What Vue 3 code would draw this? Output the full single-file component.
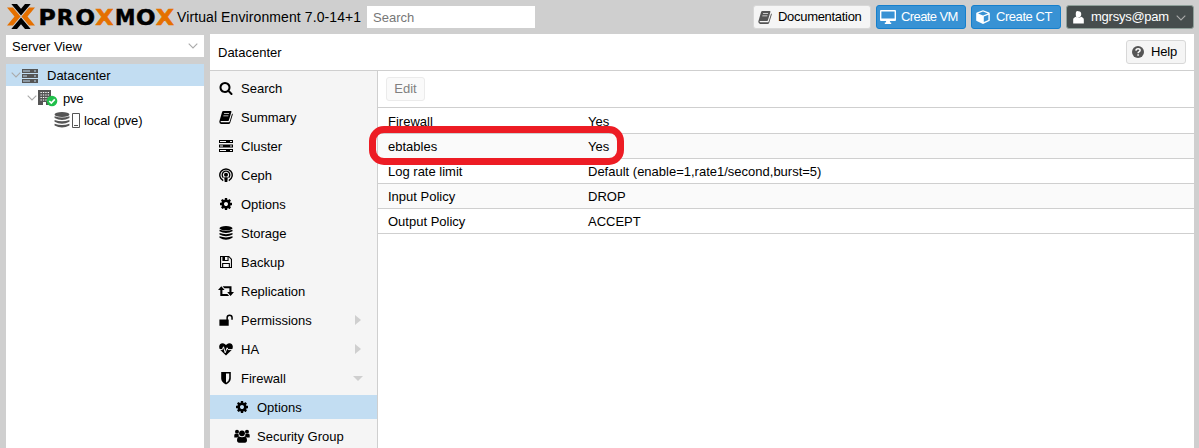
<script setup>
// Wordmark letters: left edge, horizontal stretch, side bearing of the glyph
const word = [
  { c: 'P', x: 34.8, s: 1.15, b: 1.9 },
  { c: 'R', x: 52.8, s: 1.06, b: 1.9 },
  { c: 'O', x: 70.5, s: 1.12, b: 1 },
  { c: 'X', x: 89.8, s: 1.16, b: 0.4, o: true },
  { c: 'M', x: 111, s: 1, b: 1.9 },
  { c: 'O', x: 131, s: 1.12, b: 1 },
  { c: 'X', x: 150.3, s: 1.16, b: 0.4, o: true },
]
const nav = [
  { icon: 'search', label: 'Search' },
  { icon: 'book', label: 'Summary' },
  { icon: 'server', label: 'Cluster' },
  { icon: 'ceph', label: 'Ceph' },
  { icon: 'cog', label: 'Options' },
  { icon: 'database', label: 'Storage' },
  { icon: 'floppy', label: 'Backup' },
  { icon: 'retweet', label: 'Replication' },
  { icon: 'unlock', label: 'Permissions', arrow: 'right' },
  { icon: 'heartbeat', label: 'HA', arrow: 'right' },
  { icon: 'shield', label: 'Firewall', arrow: 'down' },
  { icon: 'cog', label: 'Options', sub: true, active: true },
  { icon: 'users', label: 'Security Group', sub: true },
]
const rows = [
  ['Firewall', 'Yes'],
  ['ebtables', 'Yes'],
  ['Log rate limit', 'Default (enable=1,rate1/second,burst=5)'],
  ['Input Policy', 'DROP'],
  ['Output Policy', 'ACCEPT'],
]
</script>

<template>
  <div class="app">
    <svg class="defs" aria-hidden="true">
      <symbol id="search" viewBox="0 0 1792 1792"><path d="M1216 832q0-185-131.500-316.500t-316.500-131.500-316.500 131.500-131.500 316.500 131.500 316.500 316.500 131.500 316.500-131.500 131.500-316.500zm512 832q0 52-38 90t-90 38q-54 0-90-38l-343-342q-179 124-399 124-143 0-273.500-55.500t-225-150-150-225-55.500-273.500 55.500-273.500 150-225 225-150 273.500-55.500 273.500 55.500 225 150 150 225 55.500 273.500q0 220-124 399l343 343q37 37 37 90z" /></symbol>
      <symbol id="cog" viewBox="0 0 1792 1792"><path d="M1152 896q0-106-75-181t-181-75-181 75-75 181 75 181 181 75 181-75 75-181zm512-109v222q0 12-8 23t-20 13l-185 28q-19 54-39 91 35 50 107 138 10 12 10 25t-9 23q-27 37-99 108t-94 71q-12 0-26-9l-138-108q-44 23-91 38-16 136-29 186-7 28-36 28h-222q-14 0-24.500-8.500t-11.500-21.500l-28-184q-49-16-90-37l-141 107q-10 9-25 9-14 0-25-11-126-114-165-168-7-10-7-23 0-12 8-23 15-21 51-66.500t54-70.500q-27-50-41-99l-183-27q-13-2-21-12.500t-8-23.500v-222q0-12 8-23t19-13l186-28q14-46 39-92-40-57-107-138-10-12-10-24 0-10 9-23 26-36 98.500-107.500t94.500-71.500q13 0 26 10l138 107q44-23 91-38 16-136 29-186 7-28 36-28h222q14 0 24.500 8.500t11.500 21.500l28 184q49 16 90 37l142-107q9-9 24-9 13 0 25 10 129 119 165 170 7 8 7 22 0 12-8 23-15 21-51 66.500t-54 70.500q26 50 41 98l183 28q13 2 21 12.500t8 23.500z" /></symbol>
      <symbol id="book" viewBox="0 0 14 14">
        <path fill-rule="evenodd" d="M4.500 1h7.300q.9 0 .6 1l-2.500 8.200q-.3.900-1.300.9H2.300q-.8 0-.8.500 0 .7.900.7h7.400q.6 0 .8-.6l2.500-8.200q.9.400.6 1.300l-2.500 8q-.4 1.200-1.600 1.200H2.100Q.2 13.500.3 11.400L3 2.200Q3.300 1 4.500 1zM5.200 3.200l-.3.900h5l.3-.9zM4.500 5.400l-.3.900h5l.3-.9z" />
      </symbol>
      <symbol id="server" viewBox="0 0 14 14"><path fill-rule="evenodd" d="M0 1h14v3H0zM1 2v1h6V2zm10 0v1h2V2zM0 5.500h14v3H0zM1 6.500v1h3v-1zm10 0v1h2v-1zM0 10h14v3H0zM1 11v1h6v-1zm10 0v1h2v-1z" /></symbol>
      <symbol id="ceph" viewBox="0 0 14 14">
        <g fill="none" stroke="currentColor" stroke-width="1.400"><path d="M4.200 12.700a6.200 6.200 0 1 1 5.600 0" /><path d="M4.400 9.700a3.800 3.800 0 1 1 5.200 0" stroke-width="1.300" /></g>
        <circle cx="7" cy="6.800" r="2" /><path d="M5.200 9.300h3.600L8.300 14H5.700z" />
      </symbol>
      <symbol id="database" viewBox="0 0 14 14">
        <ellipse cx="7" cy="2.200" rx="6.500" ry="2.100" />
        <path d="M.5 3.700q6.500 2.300 13 0v1.500q-6.500 3.400-13 0zM.5 7q6.500 2.300 13 0v1.500q-6.500 3.400-13 0zM.5 10.300q6.500 2.300 13 0v1.500q-6.500 3.700-13 0z" />
      </symbol>
      <symbol id="floppy" viewBox="0 0 14 14"><path fill-rule="evenodd" d="M1 1h9l3 3v9H1zM2.100 2.100v9.800h1V8h7.800v3.900h1V4.500L9.600 2.100V6H3.400V2.100zm3.900 0V5h2.500V2.100zM4.200 9v2.900h5.600V9z" /></symbol>
      <symbol id="retweet" viewBox="0 0 16 14"><path d="M3.300 2.300 6.600 6H4.400v4h5l1.800 2H2.300V6H0zM4.600 2.300h8.900V8H16l-3.400 3.900L9.200 8h2.200V4.300H6.400z" /></symbol>
      <symbol id="unlock" viewBox="0 0 14 14"><path d="M.4 6.500h7V4.600a3.200 3.200 0 0 1 6.400 0v2.200h-1.500V4.600a1.700 1.700 0 0 0-3.400 0v1.900h.8v6.300H.4z" /></symbol>
      <symbol id="heartbeat" viewBox="0 0 14 14">
        <path d="M7 13.500 1.300 8C-.8 5.500 0 1.200 3.700 1.200 5.400 1.200 6.200 2.300 7 3.100c.8-.8 1.600-1.900 3.300-1.900C14 1.200 14.800 5.500 12.700 8z" />
        <path d="M0 7.600h3.300l1.200-2.800 1.700 6 1.900-5 1 1.800H14" fill="none" stroke="#f5f5f5" stroke-width="1" />
      </symbol>
      <symbol id="shield" viewBox="0 0 14 14"><path fill-rule="evenodd" d="M2.200 1h9.600v6.500q0 3.700-4.800 6-4.800-2.300-4.800-6zM7 2.600v9.200q3.200-1.800 3.200-4.500V2.600z" /></symbol>
      <symbol id="users" viewBox="0 0 16 14">
        <circle cx="3" cy="2.700" r="2" /><circle cx="13" cy="2.700" r="2" /><circle cx="8" cy="4.300" r="2.900" />
        <path d="M.3 8.500V6.200q0-1.700 1.300-1.500 1.400.8 3 0-.3 1.900.8 2.800-1.500 0-2.100 1zM15.700 8.500V6.200q0-1.700-1.300-1.500-1.400.8-3 0 .3 1.900-.8 2.800 1.500 0 2.100 1zM5.200 7.400q2.800 1.500 5.600 0 2.200.4 2.200 4.200 0 2.100-1.800 2.100H4.800Q3 13.700 3 11.600q0-3.800 2.200-4.200z" />
      </symbol>
      <symbol id="desktop" viewBox="0 0 16 14"><path fill-rule="evenodd" d="M1 0h14q1 0 1 1v9q0 1-1 1H9.800l.4 1.400h1V14H4.800v-1.600h1L6.200 11H1q-1 0-1-1V1q0-1 1-1zm.4 1.400v7h13.200v-7z" /></symbol>
      <symbol id="cube" viewBox="0 0 14 14"><path fill-rule="evenodd" d="m7 .2 6.200 2.400q.6.300.6.900v6.700q0 .6-.5.900L7 14 .7 11.100q-.5-.3-.5-.9V3.500q0-.6.600-.9zM7 1.600 2 3.500l5 1.900 5-1.900zm.8 10.500 4.600-2.200V4.800L7.800 6.600z" /></symbol>
      <symbol id="user" viewBox="0 0 12 14"><path d="M6 .3q3 0 3 3.200T6 7.400 3 3.500 6 .3z" /><path d="M3 6.300q3 2.300 6 0l1.800.9q1 .6 1 2v4.300H.2V9.200q0-1.400 1-2z" /></symbol>
      <symbol id="chevron" viewBox="0 0 10 6"><path d="m.7.700 4.300 4.300L9.300.7" fill="none" stroke="currentColor" stroke-width="1.100" /></symbol>
    </svg>

    <header class="top">
      <svg class="logo" width="170" height="30" viewBox="0 0 170 30">
        <g fill="#e57000"><path d="M1 7.500h6l7.500 9-7.500 9H1l7.500-9z" /><path d="M29 7.500h-6l-7.500 9 7.500 9h6l-7.500-9z" /></g>
        <path d="M5.300 4h5.700l4 4.800L19 4h5.700L15 15.500zM5.300 29H11l4-4.800 4 4.800h5.700L15 17.500z" />
        <text v-for="(l, i) in word" :key="i" class="word" :class="{ orange: l.o }" :x="-l.b" y="0" :transform="`translate(${l.x} 24.500) scale(${l.s} 1)`">{{ l.c }}</text>
      </svg>
      <span class="version">Virtual Environment 7.0-14+1</span>
      <input class="find" placeholder="Search">
      <div class="actions">
        <button class="btn doc"><svg width="14" height="14"><use href="#book" /></svg>Documentation</button>
        <button class="btn blue vm"><svg width="16" height="14"><use href="#desktop" /></svg>Create VM</button>
        <button class="btn blue ct"><svg width="14" height="14"><use href="#cube" /></svg>Create CT</button>
        <button class="btn dark"><svg width="11" height="13"><use href="#user" /></svg>mgrsys@pam<svg class="chev" width="10" height="6"><use href="#chevron" /></svg></button>
      </div>
    </header>

    <div class="body">
      <aside class="left">
        <div class="view"><span>Server View</span><svg width="10" height="6"><use href="#chevron" /></svg></div>
        <div class="tree">
          <div class="node sel"><svg class="exp" width="10" height="6"><use href="#chevron" /></svg><svg class="n-server" width="16" height="15" viewBox="0 0 16 15"><path fill-rule="evenodd" d="M0 1h16v4H0zm1 1.500v1h7v-1zm11 0v1h2v-1zM0 6h16v4H0zm1 1.500v1h4v-1zm11 0v1h2v-1zM0 11h16v4H0zm1 1.500v1h7v-1zm11 0v1h2v-1z" /></svg><span>Datacenter</span></div>
          <div class="node l1"><svg class="exp" width="10" height="6"><use href="#chevron" /></svg>
            <svg class="n-pve" width="20" height="17" viewBox="0 0 20 17">
              <path d="M0 0h13v15H0z" />
              <path d="M2.500 2.500h9M2.500 5h9M2.500 7.500h9M2.500 10h9" stroke="#fff" stroke-width="1.200" stroke-dasharray="1.300 1.100" /><path d="M5 12h3v3H5z" fill="#fff" />
              <circle cx="14" cy="11" r="5.300" fill="#21bf4b" /><path d="m11.300 11 2 2.100 3.500-3.700" fill="none" stroke="#fff" stroke-width="1.700" />
            </svg><span>pve</span></div>
          <div class="node l2"><svg width="16" height="16"><use href="#database" /></svg><svg class="n-drive" width="8" height="15"><path d="M.5.500h7v14h-7zM2 12.500h4" fill="none" stroke="#555" /></svg><span>local (pve)</span></div>
        </div>
      </aside>

      <main class="main">
        <div class="title"><span>Datacenter</span>
          <button class="btn help"><svg width="12" height="12" viewBox="0 0 12 12"><circle cx="6" cy="6" r="6" /><path d="M3.900 4.600q.1-1.900 2.200-1.900 2 0 2 1.600 0 1-1.100 1.600-.9.500-.9 1.300M6.100 8.300v1.500" fill="none" stroke="#fff" stroke-width="1.500" /></svg>Help</button>
        </div>
        <div class="work">
          <nav class="menu">
            <div v-for="(n, i) in nav" :key="i" class="item" :class="{ sub: n.sub, active: n.active }">
              <span class="ico"><svg :width="n.icon === 'retweet' || n.icon === 'users' ? 16 : 14" height="14"><use :href="'#' + n.icon" /></svg></span>
              <span class="label">{{ n.label }}</span><i v-if="n.arrow" :class="n.arrow"></i>
            </div>
          </nav>
          <section class="panel">
            <div class="toolbar"><button class="btn edit">Edit</button></div>
            <div v-for="r in rows" :key="r[0]" class="row"><span class="key">{{ r[0] }}</span><span>{{ r[1] }}</span></div>
            <div class="mark"></div>
          </section>
        </div>
      </main>
    </div>
  </div>
</template>

<style>
html, body { overflow: hidden; }
</style>

<style scoped>
.app { height: 448px; width: 1199px; overflow: hidden; background: #cfcfcf; color: #000; font: 13px/16px "Liberation Sans", Arial, sans-serif; display: flex; flex-direction: column; box-sizing: border-box; }
.app * { box-sizing: border-box; }
.defs { position: absolute; width: 0; height: 0; }
svg { fill: currentColor; flex: none; display: block; }
.top { height: 34px; flex: none; display: flex; align-items: center; padding: 0 5px 0 6px; }
.logo { fill: #000; flex: none; margin-top: -4px; }
.word { font: bold 20.500px "DejaVu Sans", sans-serif; stroke: #000; stroke-width: .5px; }
.orange { fill: #e57000; stroke: #e57000; }
.version { font-size: 14px; width: 190px; margin-left: 1px; white-space: nowrap; letter-spacing: .1px; }
.find { width: 168px; height: 22px; border: 0; padding: 1px 6px 0; font: 13px "Liberation Sans", sans-serif; outline: 0; }
.find::placeholder { color: #777; opacity: 1; }
.actions { margin-left: auto; display: flex; gap: 5px; }
.btn { height: 24px; border: 1px solid #d8d8d8; border-radius: 3px; background: #f5f5f5; font: 13px/16px "Liberation Sans", sans-serif; color: #000; display: flex; align-items: center; padding: 0; white-space: nowrap; }
.doc { width: 118px; padding-left: 4px; gap: 6px; letter-spacing: -.3px; }
.doc svg, .help svg { color: #555; }
.blue { width: 90px; background: #3892d4; border-color: #157fcc; color: #fff; }
.vm { padding-left: 3px; gap: 5px; letter-spacing: -.6px; }
.ct { padding-left: 4px; gap: 6px; letter-spacing: -.45px; }
.dark { width: 128px; background: #464d4d; border-color: #8fa09a; color: #fff; padding-left: 6px; gap: 7px; letter-spacing: -.25px; }
.chev { color: #aaa; margin-top: 2px; }
.body { flex: 1; min-height: 0; display: flex; gap: 6px; padding: 0 5px 0 6px; }
.left { width: 198px; flex: none; display: flex; flex-direction: column; gap: 7px; padding-top: 1px; }
.view { height: 22px; background: #fff; padding: 0 6px; display: flex; align-items: center; justify-content: space-between; }
.view span { padding-top: 2px; }
.view svg { color: #aaa; }
.tree { flex: 1; background: #fff; }
.node { height: 22px; display: flex; align-items: center; padding-left: 5px; }
.node span { padding-top: 2px; }
.node svg { color: #555; }
.node .exp { color: #aaa; }
.sel { background: #c2ddf2; }
.n-server { margin: 0 9px 0 1px; }
.l1 { height: 23px; padding-left: 21px; letter-spacing: -.3px; }
.n-pve { margin: 2px 5px 0 1px; }
.l2 { padding-left: 48px; letter-spacing: -.15px; }
.n-drive { margin: 0 4px 0 2px; }
.main { flex: 1; min-width: 0; display: flex; flex-direction: column; background: #fff; }
.title { height: 37px; flex: none; border-bottom: 1px solid #cfcfcf; display: flex; align-items: center; justify-content: space-between; padding: 0 8px; }
.title > span { padding-top: 2px; }
.help { width: 60px; padding-left: 5px; gap: 7px; letter-spacing: -.15px; }
.work { flex: 1; min-height: 0; display: flex; }
.menu { width: 168px; flex: none; background: #f5f5f5; border-right: 1px solid #cfcfcf; padding-top: 5px; display: flex; flex-direction: column; gap: 5px; overflow: hidden; }
.item { height: 24px; flex: none; display: flex; align-items: center; padding: 0 14px 0 8px; }
.item.sub { padding-left: 24px; }
.label { padding-top: 2px; }
.active { background: #c2ddf2; }
.ico { width: 16px; margin-right: 7px; display: flex; justify-content: center; }
.item i { margin-left: auto; }
.right { border: 5px solid transparent; border-left: 6px solid #cfcfcf; border-right: 0; margin-right: 2px; }
.down { border: 5px solid transparent; border-top-color: #cfcfcf; border-bottom: 0; }
.panel { flex: 1; position: relative; }
.toolbar { height: 37px; border-bottom: 1px solid #cfcfcf; padding: 6px 8px; }
.edit { width: 39px; justify-content: center; color: #808080; background: #fafafa; border-color: #ebebeb; }
.row { height: 25px; border-bottom: 1px solid #cfcfcf; display: flex; align-items: center; padding: 2px 0 0 10px; }
.row:nth-child(2) { height: 26px; }
.row:nth-child(odd) { background: #fafafa; }
.key { width: 200px; }
.mark { position: absolute; left: -9px; top: 55px; width: 255px; height: 39px; border: 7px solid #ed1c24; border-radius: 15px; }
</style>
